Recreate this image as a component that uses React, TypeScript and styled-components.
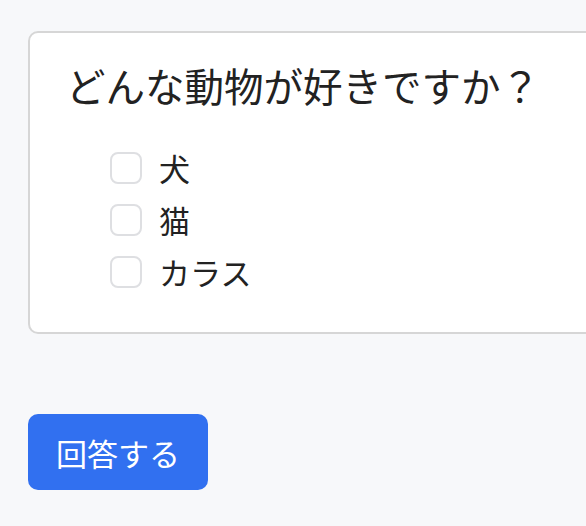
import React from "react";
import styled, { createGlobalStyle } from "styled-components";

const GlobalStyle = createGlobalStyle`
  html, body {
    margin: 0;
    padding: 0;
    overflow: hidden;
    background: #f7f8fa;
  }
  body {
    font-family: "Noto Sans CJK JP", "Noto Sans", sans-serif;
    color: #222;
  }
`;

const Page = styled.div`
  padding: 31px 0 0 28px;
  display: flex;
  flex-direction: column;
  align-items: flex-start;
  gap: 80px;
`;

const Card = styled.div`
  width: 640px;
  box-sizing: border-box;
  background: #fff;
  border: 2px solid #d6d6d6;
  border-radius: 10px;
  padding: 24px 36px 44px;
`;

const Title = styled.h1`
  margin: 0 0 40px;
  font-size: 39.5px;
  font-weight: 400;
  line-height: 1.4;
`;

const OptionList = styled.div`
  display: flex;
  flex-direction: column;
  gap: 20px;
  padding-left: 44px;
`;

const Option = styled.label`
  display: flex;
  align-items: center;
  gap: 17px;
  font-size: 31px;
  line-height: 32px;
`;

const Box = styled.span`
  width: 32px;
  height: 32px;
  box-sizing: border-box;
  border: 2px solid #dedfe2;
  border-radius: 8px;
  background: #fff;
`;

const SubmitButton = styled.button`
  width: 180px;
  height: 76px;
  border: none;
  border-radius: 10px;
  background: #3170f0;
  color: #fff;
  font-family: inherit;
  font-size: 31px;
`;

const options = ["犬", "猫", "カラス"];

function App() {
  return (
    <Page>
      <GlobalStyle />
      <Card>
        <Title>どんな動物が好きですか？</Title>
        <OptionList>
          {options.map((o) => (
            <Option key={o}>
              <Box />
              {o}
            </Option>
          ))}
        </OptionList>
      </Card>
      <SubmitButton>回答する</SubmitButton>
    </Page>
  );
}

export default App;
